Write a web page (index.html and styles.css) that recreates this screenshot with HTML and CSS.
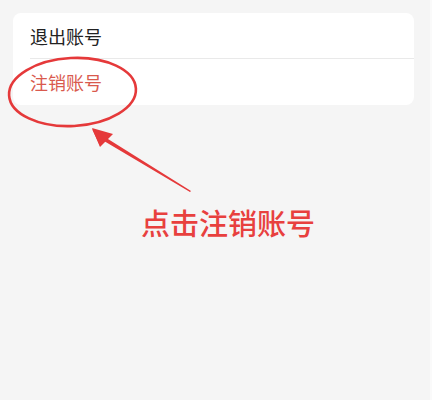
FILE: index.html
```html
<!DOCTYPE html>
<html lang="zh">
<head>
<meta charset="utf-8">
<link rel="stylesheet" href="styles.css">
</head>
<body>
<div class="page">
  <div class="card">
    <div class="row"><span class="label">退出账号</span></div>
    <div class="row danger"><span class="label">注销账号</span></div>
  </div>
  <div class="hint">点击注销账号</div>
  <svg class="annot" width="432" height="400" viewBox="0 0 432 400" xmlns="http://www.w3.org/2000/svg">
    <ellipse cx="72.5" cy="92" rx="63.5" ry="34" fill="none" stroke="#e5393a" stroke-width="2.6" transform="rotate(-3 72.5 92)"/>
    <polygon points="92,129 191,191 190,192 104,141 100,146" fill="#e5393a"/>
    <polygon points="92,128 113,134 100,147" fill="#e5393a"/>
  </svg>
</div>
</body>
</html>
```
FILE: styles.css
```css
html, body {
  margin: 0;
  padding: 0;
}
body {
  width: 432px;
  height: 400px;
  background: #f5f5f5;
  font-family: "Noto Sans CJK SC", "Noto Sans", sans-serif;
  overflow: hidden;
}
.page {
  position: relative;
  box-sizing: border-box;
  width: 432px;
  height: 400px;
  padding: 13px 0 0 13px;
  border-right: 2px solid #fafafa;
  display: flex;
  flex-direction: column;
}
.card {
  width: 401px;
  background: #ffffff;
  border-radius: 8px;
  overflow: hidden;
}
.row {
  height: 45px;
  padding-left: 17px;
  display: flex;
  align-items: center;
  font-size: 18px;
  color: #222222;
}
.row + .row {
  height: 46px;
  margin-left: 17px;
  padding-left: 0;
  border-top: 1px solid #e9e9e9;
}
.danger {
  color: #d95a4e;
}
.hint {
  margin-top: 99px;
  margin-left: 128px;
  font-size: 29px;
  line-height: 36px;
  color: #e8403e;
  font-weight: 500;
}
.annot {
  position: absolute;
  left: 0;
  top: 0;
  pointer-events: none;
}
```
